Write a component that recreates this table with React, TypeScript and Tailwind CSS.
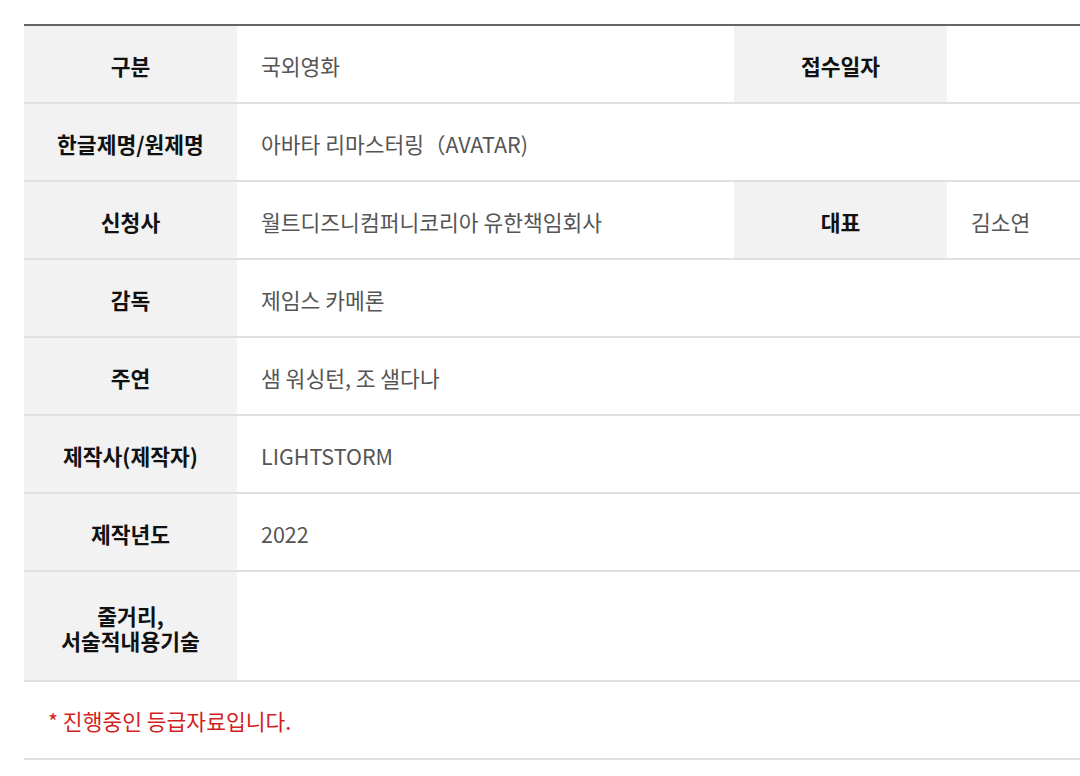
const font = { fontFamily: '"Noto Sans CJK KR", "Noto Sans", sans-serif' };

function Th({ children }: { children: React.ReactNode }) {
  return (
    <th className="bg-[#f2f2f2] text-center align-middle text-[21.5px] font-bold text-[#111] leading-[25px] border-b-2 border-[#e0e0e0] px-2 pt-[3px]">
      {children}
    </th>
  );
}

function Td({ children, colSpan }: { children?: React.ReactNode; colSpan?: number }) {
  return (
    <td
      colSpan={colSpan}
      className="text-left align-middle text-[21.5px] text-[#555] leading-[26px] border-b-2 border-[#e0e0e0] pl-6 pt-[3px]"
    >
      {children}
    </td>
  );
}

export default function App() {
  const rows: { label: React.ReactNode; value: string }[] = [
    { label: "감독", value: "제임스 카메론" },
    { label: "주연", value: "샘 워싱턴, 조 샐다나" },
    { label: "제작사(제작자)", value: "LIGHTSTORM" },
    { label: "제작년도", value: "2022" },
  ];

  return (
    <div className="min-h-screen bg-white pt-6 pl-6 overflow-hidden" style={font}>
      <table className="w-[1056px] table-fixed border-collapse border-t-2 border-[#666]">
        <colgroup>
          <col className="w-[213px]" />
          <col className="w-[497px]" />
          <col className="w-[213px]" />
          <col className="w-[133px]" />
        </colgroup>
        <tbody>
          <tr className="h-[78px]">
            <Th>구분</Th>
            <Td>국외영화</Td>
            <Th>접수일자</Th>
            <Td />
          </tr>
          <tr className="h-[78px]">
            <Th>한글제명/원제명</Th>
            <Td colSpan={3}>아바타 리마스터링（AVATAR)</Td>
          </tr>
          <tr className="h-[78px]">
            <Th>신청사</Th>
            <Td>월트디즈니컴퍼니코리아 유한책임회사</Td>
            <Th>대표</Th>
            <Td>김소연</Td>
          </tr>
          {rows.map((r, i) => (
            <tr key={i} className="h-[78px]">
              <Th>{r.label}</Th>
              <Td colSpan={3}>{r.value}</Td>
            </tr>
          ))}
          <tr className="h-[110px]">
            <Th>
              줄거리,
              <br />
              서술적내용기술
            </Th>
            <Td colSpan={3} />
          </tr>
          <tr className="h-[78px]">
            <td colSpan={4} className="pl-6 pt-[3px] align-middle text-[21.5px] text-[#d21f1f] border-b-2 border-[#e0e0e0]">
              * 진행중인 등급자료입니다.
            </td>
          </tr>
        </tbody>
      </table>
    </div>
  );
}
